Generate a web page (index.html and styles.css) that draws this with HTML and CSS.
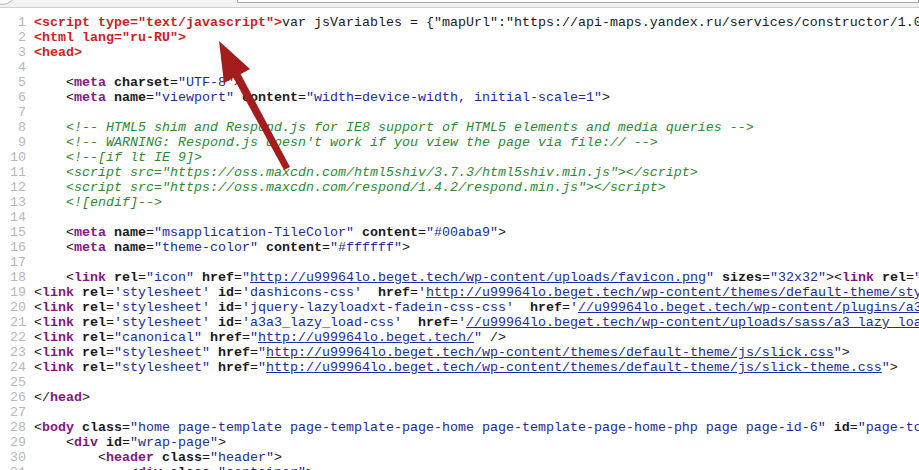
FILE: index.html
```html
<!DOCTYPE html>
<html lang="ru">

<head>
    <meta charset="UTF-8">
    <meta name="viewport" content="width=device-width, initial-scale=1.0">
    <title>view-source:u99964lo.beget.tech</title>

    <link rel="stylesheet" href="styles.css">
</head>

<body>
    <div class="chrome">
        <div class="chrome-btn"></div>
        <div class="chrome-url"></div>
    </div>

    <div class="source">
        <div class="line"><span class="num">1</span><span class="code"><span class="err">&lt;script type="text/javascript"&gt;</span>var jsVariables = {"mapUrl":"https://api-maps.yandex.ru/services/constructor/1.0</span></div>
        <div class="line"><span class="num">2</span><span class="code"><span class="err">&lt;html lang="ru-RU"&gt;</span></span></div>
        <div class="line"><span class="num">3</span><span class="code"><span class="err">&lt;head&gt;</span></span></div>
        <div class="line"><span class="num">4</span><span class="code"></span></div>
        <div class="line"><span class="num">5</span><span class="code">    &lt;<span class="tag">meta</span> <span class="attr">charset</span>=<span class="val">"UTF-8"</span>&gt;</span></div>
        <div class="line"><span class="num">6</span><span class="code">    &lt;<span class="tag">meta</span> <span class="attr">name</span>=<span class="val">"viewport"</span> <span class="attr">content</span>=<span class="val">"width=device-width, initial-scale=1"</span>&gt;</span></div>
        <div class="line"><span class="num">7</span><span class="code"></span></div>
        <div class="line"><span class="num">8</span><span class="code">    <span class="cmt">&lt;!-- HTML5 shim and Respond.js for IE8 support of HTML5 elements and media queries --&gt;</span></span></div>
        <div class="line"><span class="num">9</span><span class="code">    <span class="cmt">&lt;!-- WARNING: Respond.js doesn't work if you view the page via file:// --&gt;</span></span></div>
        <div class="line"><span class="num">10</span><span class="code">    <span class="cmt">&lt;!--[if lt IE 9]&gt;</span></span></div>
        <div class="line"><span class="num">11</span><span class="code">    <span class="cmt">&lt;script src="https://oss.maxcdn.com/html5shiv/3.7.3/html5shiv.min.js"&gt;&lt;/script&gt;</span></span></div>
        <div class="line"><span class="num">12</span><span class="code">    <span class="cmt">&lt;script src="https://oss.maxcdn.com/respond/1.4.2/respond.min.js"&gt;&lt;/script&gt;</span></span></div>
        <div class="line"><span class="num">13</span><span class="code">    <span class="cmt">&lt;![endif]--&gt;</span></span></div>
        <div class="line"><span class="num">14</span><span class="code"></span></div>
        <div class="line"><span class="num">15</span><span class="code">    &lt;<span class="tag">meta</span> <span class="attr">name</span>=<span class="val">"msapplication-TileColor"</span> <span class="attr">content</span>=<span class="val">"#00aba9"</span>&gt;</span></div>
        <div class="line"><span class="num">16</span><span class="code">    &lt;<span class="tag">meta</span> <span class="attr">name</span>=<span class="val">"theme-color"</span> <span class="attr">content</span>=<span class="val">"#ffffff"</span>&gt;</span></div>
        <div class="line"><span class="num">17</span><span class="code"></span></div>
        <div class="line"><span class="num">18</span><span class="code">    &lt;<span class="tag">link</span> <span class="attr">rel</span>=<span class="val">"icon"</span> <span class="attr">href</span>=<span class="val">"<a class="lnk">http://u99964lo.beget.tech/wp-content/uploads/favicon.png</a>"</span> <span class="attr">sizes</span>=<span class="val">"32x32"</span>&gt;&lt;<span class="tag">link</span> <span class="attr">rel</span>=<span class="val">"</span></span></div>
        <div class="line"><span class="num">19</span><span class="code">&lt;<span class="tag">link</span> <span class="attr">rel</span>=<span class="val">'stylesheet'</span> <span class="attr">id</span>=<span class="val">'dashicons-css'</span>  <span class="attr">href</span>=<span class="val">'<a class="lnk">http://u99964lo.beget.tech/wp-content/themes/default-theme/sty</a></span></span></div>
        <div class="line"><span class="num">20</span><span class="code">&lt;<span class="tag">link</span> <span class="attr">rel</span>=<span class="val">'stylesheet'</span> <span class="attr">id</span>=<span class="val">'jquery-lazyloadxt-fadein-css-css'</span>  <span class="attr">href</span>=<span class="val">'<a class="lnk">//u99964lo.beget.tech/wp-content/plugins/a3</a></span></span></div>
        <div class="line"><span class="num">21</span><span class="code">&lt;<span class="tag">link</span> <span class="attr">rel</span>=<span class="val">'stylesheet'</span> <span class="attr">id</span>=<span class="val">'a3a3_lazy_load-css'</span>  <span class="attr">href</span>=<span class="val">'<a class="lnk">//u99964lo.beget.tech/wp-content/uploads/sass/a3_lazy_loa</a></span></span></div>
        <div class="line"><span class="num">22</span><span class="code">&lt;<span class="tag">link</span> <span class="attr">rel</span>=<span class="val">"canonical"</span> <span class="attr">href</span>=<span class="val">"<a class="lnk">http://u99964lo.beget.tech/</a>"</span> /&gt;</span></div>
        <div class="line"><span class="num">23</span><span class="code">&lt;<span class="tag">link</span> <span class="attr">rel</span>=<span class="val">"stylesheet"</span> <span class="attr">href</span>=<span class="val">"<a class="lnk">http://u99964lo.beget.tech/wp-content/themes/default-theme/js/slick.css</a>"</span>&gt;</span></div>
        <div class="line"><span class="num">24</span><span class="code">&lt;<span class="tag">link</span> <span class="attr">rel</span>=<span class="val">"stylesheet"</span> <span class="attr">href</span>=<span class="val">"<a class="lnk">http://u99964lo.beget.tech/wp-content/themes/default-theme/js/slick-theme.css</a>"</span>&gt;</span></div>
        <div class="line"><span class="num">25</span><span class="code"></span></div>
        <div class="line"><span class="num">26</span><span class="code">&lt;/<span class="tag">head</span>&gt;</span></div>
        <div class="line"><span class="num">27</span><span class="code"></span></div>
        <div class="line"><span class="num">28</span><span class="code">&lt;<span class="tag">body</span> <span class="attr">class</span>=<span class="val">"home page-template page-template-page-home page-template-page-home-php page page-id-6"</span> <span class="attr">id</span>=<span class="val">"page-to</span></span></div>
        <div class="line"><span class="num">29</span><span class="code">    &lt;<span class="tag">div</span> <span class="attr">id</span>=<span class="val">"wrap-page"</span>&gt;</span></div>
        <div class="line"><span class="num">30</span><span class="code">        &lt;<span class="tag">header</span> <span class="attr">class</span>=<span class="val">"header"</span>&gt;</span></div>
        <div class="line"><span class="num">31</span><span class="code">            &lt;<span class="tag">div</span> <span class="attr">class</span>=<span class="val">"container"</span>&gt;</span></div>
    </div>

    <!-- red arrow drawn over the source -->
    <svg class="arrow" width="919" height="470" viewBox="0 0 919 470">
        <polygon points="284,170 290,167 240,73 233,77" fill="#a41d1d" />
        <polygon points="219,41 250,69 224,83" fill="#a41d1d" />
    </svg>
</body>

</html>
```

FILE: styles.css
```css
body {
    margin: 0;
    background-color: #fff;
    width: 919px;
    height: 470px;
    overflow: hidden;
    position: relative;
}

.chrome {
    height: 7px;
    background-color: #f2f2f2;
    border-bottom: 1px solid #cfcfcf;
    display: flex;
    overflow: hidden;
}

.chrome-btn {
    flex: none;
    width: 28px;
    height: 28px;
    margin: -25px 0 0 -13px;
    border: 1px solid #b5b5b5;
    border-radius: 50%;
    background-color: #fafafa;
}

.chrome-url {
    flex: 1;
    height: 16px;
    margin: -15px 0 0 220px;
    border: 1px solid #a8a8a8;
    background-color: #fff;
}

.source {
    padding-top: 7px;
    font-family: "Liberation Mono", "Courier New", monospace;
    font-size: 13.33px;
    line-height: 15px;
    color: #1a1a1a;
    overflow: hidden;
}

.line {
    display: flex;
    white-space: pre;
}

.num {
    flex: none;
    width: 26px;
    margin-right: 8px;
    text-align: right;
    color: #b8b8b8;
}

.err {
    color: #d01f1f;
    font-weight: bold;
}

.tag {
    color: #861686;
    font-weight: bold;
}

.attr {
    font-weight: bold;
}

.val {
    color: #1d2a9e;
}

.lnk {
    color: #1d2a9e;
    text-decoration: underline;
}

.cmt {
    color: #2e8a2e;
    font-style: italic;
}

.arrow {
    position: absolute;
    top: 0;
    left: 0;
    pointer-events: none;
}
```
